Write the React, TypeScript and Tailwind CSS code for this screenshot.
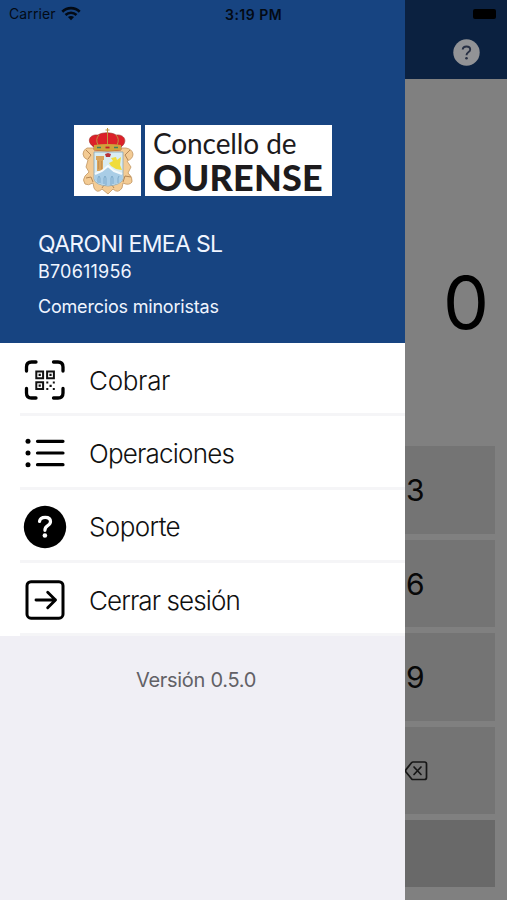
import React from "react";

const inter = "font-['Inter','Liberation_Sans',sans-serif]";

function WifiIcon() {
  return (
    <svg width="20" height="15" viewBox="0 0 20 15" fill="none" stroke="#030a14" strokeWidth="2.6">
      <path d="M1.3 5.7C6.2.9 13.8.9 18.7 5.7" />
      <path d="M4.5 9C7.7 6 12.3 6 15.5 9" />
      <path d="M10 14.2 6.9 11.1C8.7 9.5 11.3 9.5 13.1 11.1Z" fill="#030a14" stroke="none" />
    </svg>
  );
}

function Crest() {
  return (
    <svg width="66" height="71" viewBox="0 0 66 71">
      <path
        d="M19 23 13 23Q9 25 9 29 9 33 14 35L12 42 15 47 11 51Q8 55 11 59 14 61 19 58L20 63Q23 69 28 64L34 69 39 64Q44 69 48 63L49 58Q55 61 58 57 59 52 54 48L57 42 53 36Q59 34 59 29 58 24 52 23L48 23Z"
        fill="#f3cb94"
        stroke="#c09662"
        strokeWidth=".8"
      />
      <path d="M12 25 17 30 14 34M12 53 17 52 19 57M56 25 51 30 54 35M57 52 51 51 49 57M28 63 30 60 38 60 40 63" fill="none" stroke="#b58755" strokeWidth="1" />
      <path d="M20 27H49V54Q47 60 34 61 21 60 20 54Z" fill="#d9ecf2" stroke="#88a4b4" strokeWidth=".8" />
      <path d="M22 31H30V35H29V46H23V35H22Z" fill="#d9a45c" />
      <path d="M24.500 36V44M27.500 36V44" stroke="#b98546" strokeWidth=".6" />
      <path d="M37 41 35 38 39 36 37 33 42 32 43 35 47 32 46 40 48 45 42 44Z" fill="#f0dc3c" />
      <path d="M31 29 34 28 37 29 36 32H32Z" fill="#b7333c" />
      <path d="M20.500 49 28 46 34 41 40 46 48.500 49V54Q47 59 34 60.500 22 59 20.500 54Z" fill="#a9cde6" />
      <path d="M24 58V53L25 51 26 53V58M30 59V53L31 51 32 53V60M37 60V53L38 51 39 53V59M44 58V53L45 51" fill="none" stroke="#6d9dc0" strokeWidth=".7" />
      <path d="M21 49 28 46 34 41 40 46 48 49" fill="none" stroke="#f5fafc" strokeWidth="2" />
      <path d="M20 22C12 17 15 9 24 10 28 7 38 7 42 10 51 9 54 17 47 22V25Q34 27 20 25Z" fill="#dc2029" stroke="#9a3028" strokeWidth=".6" />
      <path d="M20 20Q34 18 47 20V25Q34 27 20 25Z" fill="#d0a33c" />
      <path d="M33.500 3V8M31.500 5H35.500M33.500 8V19M25 10Q21 14 24 20M42 10Q46 14 43 20" fill="none" stroke="#bd963e" strokeWidth="1" />
      <path d="M23 22.500H27M40 22.500H44" stroke="#3d8163" strokeWidth="1.500" />
      <path d="M31.500 22.500H35.500" stroke="#c21d2b" strokeWidth="1.800" />
    </svg>
  );
}

function ScanIcon() {
  return (
    <svg width="42" height="42" viewBox="0 0 42 42" fill="none">
      <path d="M2.500 12V8Q2.500 3 7.500 3H12M29.500 3H34Q39 3 39 8V12M39 29.500V34Q39 39 34 39H29.500M12 39H7.500Q2.500 39 2.500 34V29.500" stroke="#000" strokeWidth="3.300" strokeLinecap="round" />
      <path d="M12.300 12.500H19.100V19.300H12.300ZM23.100 12.500H29.900V19.300H23.100ZM12.300 23.300H19.100V30.100H12.300Z" stroke="#111" strokeWidth="2" />
      <path d="M14.600 14.800H16.800V17H14.600ZM25.400 14.800H27.600V17H25.400ZM14.600 25.600H16.800V27.800H14.600ZM22.300 22.500H24.300V24.500H22.300ZM28.800 22.500H30.800V24.500H28.800ZM25.500 25.800H27.700V28H25.500ZM22.300 29H24.300V31H22.300ZM28.800 29H30.800V31H28.800Z" fill="#111" />
    </svg>
  );
}

function ListIcon() {
  return (
    <svg width="42" height="42" viewBox="0 0 42 42">
      <path d="M13.500 9.300H39M13.500 21H39M13.500 32.700H39" stroke="#000" strokeWidth="3.200" strokeLinecap="round" />
      <circle cx="4" cy="9.300" r="2.500" /><circle cx="4" cy="21" r="2.500" /><circle cx="4" cy="32.700" r="2.500" />
    </svg>
  );
}

function HelpIcon() {
  return (
    <svg width="44" height="44" viewBox="0 0 44 44" fill="none">
      <circle cx="22" cy="22" r="21.200" fill="#000" />
      <path d="M16.500 16.500Q17 12.300 22.200 12.300 27.500 12.300 27.500 16.600 27.500 19 24.700 20.700 21.900 22.400 21.900 25.300" stroke="#fff" strokeWidth="3.200" strokeLinecap="round" />
      <circle cx="21.900" cy="30.500" r="2.300" fill="#fff" />
    </svg>
  );
}

function ExitIcon() {
  return (
    <svg width="42" height="42" viewBox="0 0 42 42" fill="none" stroke="#000" strokeLinecap="round" strokeLinejoin="round">
      <rect x="3" y="2.700" width="36" height="36.500" rx="4" strokeWidth="3" />
      <path d="M12 21H31.500M23.700 13.300 31.500 21 23.700 28.700" strokeWidth="2.900" />
    </svg>
  );
}

const items = [
  { label: "Cobrar", icon: <ScanIcon />, tracking: "tracking-[-0.3px]" },
  { label: "Operaciones", icon: <ListIcon />, tracking: "tracking-[-0.8px]" },
  { label: "Soporte", icon: <HelpIcon />, tracking: "tracking-[-0.6px]" },
  { label: "Cerrar sesión", icon: <ExitIcon />, tracking: "tracking-[-0.9px]" },
];

function Drawer() {
  return (
    <aside className="flex w-[405px] shrink-0 flex-col bg-[#f0eff5]">
      <header className="h-[343px] bg-[#174481] pt-[125px] text-[#f0f5ff]">
        <div className="ml-[74px] flex h-[71px] gap-1">
          <div className="w-[67px] bg-white"><Crest /></div>
          <div className="w-[187px] bg-white pl-2 font-[Lato,sans-serif] text-[#1d1b1d]">
            <div className="mt-px h-[34px] whitespace-nowrap text-[28px] leading-[34px] tracking-[-0.1px]">Concello de</div>
            <div className="whitespace-nowrap text-[36px] leading-[34px] font-black tracking-[0.2px]">OURENSE</div>
          </div>
        </div>
        <div className="ml-[38px] flex flex-col whitespace-nowrap">
          <h1 className="mt-[33px] text-[23px] leading-[30px] tracking-[-0.65px]">QARONI EMEA SL</h1>
          <p className="mt-[2px] text-[18px] leading-[22px] tracking-[0.2px]">B70611956</p>
          <p className="mt-[12px] text-[18px] leading-[24px] tracking-[-0.2px]">Comercios minoristas</p>
        </div>
      </header>
      <nav className="h-[293px] bg-white">
        {items.map((item) => (
          <div key={item.label} className="flex h-[73.3px] items-center pl-5">
            <div className="flex h-full flex-1 items-center border-b-[3px] border-[#f5f5f7] pt-1">
              <span className="flex w-[49px] justify-center">{item.icon}</span>
              <span className={`ml-5 text-[26px] font-light whitespace-nowrap text-[#101010] ${item.tracking}`}>{item.label}</span>
            </div>
          </div>
        ))}
      </nav>
      <p className="mt-[30px] pr-[13px] text-center text-[20px] leading-[28px] tracking-[-0.3px] text-[#626166]">Versión 0.5.0</p>
    </aside>
  );
}

function Keypad() {
  return (
    <main className="flex min-w-0 flex-1 flex-col overflow-hidden bg-[#808080]">
      <header className="h-[79px] bg-[#0b2140] pt-[39px] pl-[48px]">
        <svg width="27" height="27" viewBox="0 0 27 27" fill="none">
          <circle cx="13.500" cy="13.500" r="13.200" fill="#929396" />
          <path d="M9.700 10.500Q9.900 7.500 13.500 7.500 17.200 7.500 17.200 10.500 17.200 12 15.300 13.200 13.500 14.400 13.500 16.200" stroke="#283044" strokeWidth="1.900" />
          <circle cx="13.500" cy="19.300" r="1.300" fill="#283044" />
        </svg>
      </header>
      <div className="mt-[178px] flex h-[90px] items-center justify-end pr-[18px] text-[73px] leading-none text-black">0</div>
      <div className="mt-[99px] mr-3 flex flex-col gap-[6px] text-[30px] text-[#080808]">
        {["3", "6", "9"].map((digit) => (
          <div key={digit} className="flex h-[87.600px] items-center bg-[#747474] pt-[2px] pl-[1px]">{digit}</div>
        ))}
        <div className="flex h-[87.600px] items-center bg-[#747474]">
          <svg width="23" height="20" viewBox="0 0 23 20" fill="none" stroke="#161616" strokeWidth="1.700" strokeLinecap="round" strokeLinejoin="round">
            <path d="M8 1H19.500Q21.500 1 21.500 3V16.500Q21.500 18.500 19.500 18.500H8Q7.200 18.500 6.500 17.800L1 11Q.2 9.800 1 8.600L6.500 1.800Q7.200 1 8 1Z" />
            <path d="m9 6 7 7.500M16 6 9 13.500" />
          </svg>
        </div>
        <div className="h-[67px] bg-[#696969]" />
      </div>
    </main>
  );
}

export default function App() {
  return (
    <div className={`relative flex h-[900px] w-[507px] overflow-hidden ${inter}`}>
      <Drawer />
      <Keypad />
      <div className="absolute inset-x-0 top-0 flex h-[27px] items-center text-[14px] text-[#030a14]">
        <span className="w-[52px] pl-[9px] tracking-[0.1px]">Carrier</span>
        <span className="ml-[9px]"><WifiIcon /></span>
        <span className="ml-[144px] pt-px text-[14px] font-semibold tracking-[0.5px] whitespace-nowrap">3:19 PM</span>
        <span className="mr-[11px] ml-auto h-[10px] w-[23px] rounded-[2px] bg-black" />
      </div>
    </div>
  );
}
